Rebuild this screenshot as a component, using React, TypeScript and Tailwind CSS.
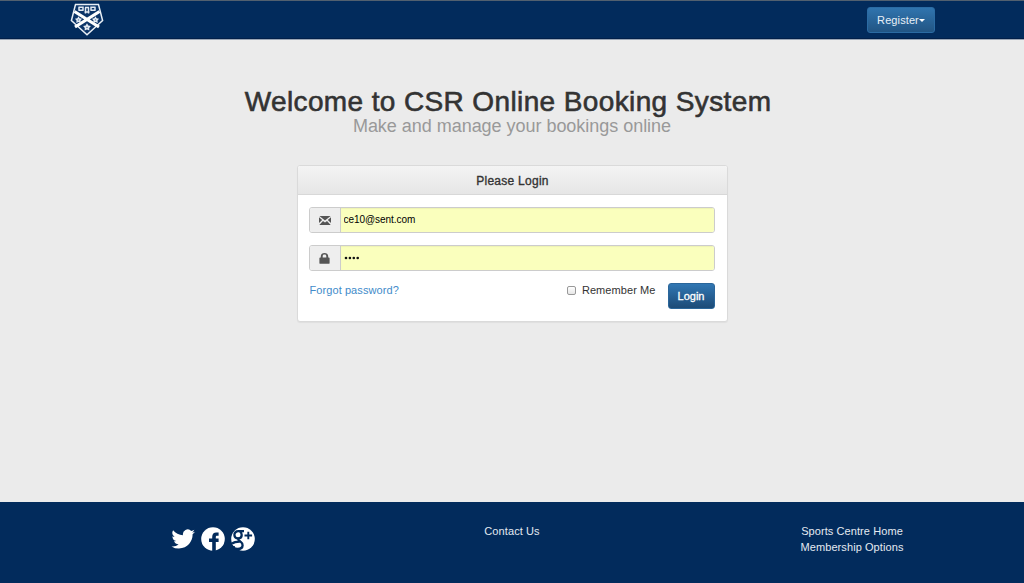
import React from "react";

const Crest = () => (
  <svg width="34" height="34" viewBox="0 0 34 34" fill="none">
    <path d="M5.500 1.500H28.500L32.600 17.500L17 31.800L1.400 17.500Z" fill="#0b3468" stroke="#e8eef5" strokeWidth="1.500" />
    <path d="M4.500 8.500L29 24M29.500 8.500L5 24" stroke="#fff" strokeWidth="3.200" />
    <path d="M9 4v3.500M13 3.500v4M21 3.500v4M25 4v3.500M8.500 4.200H13.500M8.500 7.300H13.500M20.500 4.200H25.500M20.500 7.300H25.500M15 4.500H19M14.500 9h5M15.500 4.500v6M18.500 4.500v6" stroke="#e3eaf3" strokeWidth="1.500" />
    <g fill="#e3eaf3">
      <path d="M8.500 13.200l1.200 2.100 2.400.5-1.600 1.800.2 2.400-2.200-.9-2.200.9.200-2.400-1.600-1.800 2.400-.5z" />
      <path d="M25.500 13.200l1.200 2.100 2.400.5-1.600 1.800.2 2.400-2.200-.9-2.200.9.200-2.400-1.600-1.800 2.400-.5z" />
      <path d="M17 20.300l1.300 2.300 2.600.5-1.700 1.900.2 2.600-2.400-1-2.400 1 .2-2.600-1.700-1.900 2.600-.5z" />
    </g>
    <g fill="#5c7ba0">
      <circle cx="8.500" cy="16.900" r=".7" />
      <circle cx="25.500" cy="16.900" r=".7" />
      <circle cx="17" cy="24.500" r=".8" />
    </g>
  </svg>
);

const Envelope = () => (
  <svg width="12" height="9" viewBox="0 0 12 9" fill="#555">
    <path d="M.4 0H11.6L6 4.600ZM0 1.200L3.200 4.100L0 7ZM12 1.200V7L8.800 4.100ZM4 5L6 6.600L8 5L11.700 9H.3Z" />
  </svg>
);

const Lock = () => (
  <svg width="11" height="11" viewBox="0 0 11 11" fill="#555">
    <path fillRule="evenodd" d="M1.800 4.500V3.300C1.800 1.200 3.300 0 5.500 0S9.200 1.200 9.200 3.300V4.500h.6q.8 0 .8.800v4.600q0 .9-.9.9H1.300q-.9 0-.9-.9V5.300q0-.8.8-.8zM3.700 4.500H7.300V3.500C7.300 2.300 6.700 1.600 5.500 1.600S3.700 2.300 3.700 3.500z" />
  </svg>
);

const Twitter = () => (
  <svg width="24" height="24" viewBox="-0.500 0 24.500 24" fill="#fff">
    <path d="M23.950 4.570a10 10 0 01-2.820.770 4.960 4.960 0 002.160-2.720c-.950.550-2 .960-3.130 1.180a4.920 4.920 0 00-8.380 4.480C7.690 8.090 4.070 6.130 1.640 3.160a4.920 4.920 0 001.520 6.570 4.900 4.900 0 01-2.230-.610v.060a4.920 4.920 0 003.950 4.830 5 5 0 01-2.210.080 4.930 4.930 0 004.600 3.420A9.870 9.870 0 010 19.540a13.990 13.990 0 007.550 2.210c9.050 0 14-7.500 14-13.980 0-.210 0-.420-.020-.630a9.940 9.940 0 002.460-2.550z" />
  </svg>
);

const Facebook = () => (
  <svg width="24" height="24" viewBox="0 0 24 24">
    <circle cx="12" cy="12" r="11.800" fill="#fff" />
    <path d="M11.200 24V15H8V11.500H11.200V10C11.200 7 12.800 5.600 15.300 5.600H17.600V8.800H16.200C15.200 8.800 14.800 9.300 14.800 10.200V11.500H17.600V15H14.800V24Z" fill="#022b5c" />
  </svg>
);

const GooglePlus = () => (
  <svg width="24" height="24" viewBox="0 0 24 24">
    <circle cx="12" cy="12" r="11.800" fill="#fff" />
    <g fill="none" stroke="#022b5c" strokeWidth="2.300">
      <path d="M13 4.200H7.500C4.700 4.200 3.300 6 3.400 8C3.500 10.100 4.900 11.400 7 11.400C9.400 11.400 10.700 9.900 10.700 8C10.700 6.500 10.100 5.300 8.900 4.400" />
      <path d="M7.500 11.400C6.600 12.900 8.100 13.600 9.500 14.700C11.100 15.900 11.700 16.900 11.600 18.400C11.500 20.900 9.500 22 6.700 22C4.500 22 2.600 21 2.400 19M1 16.600C3 15 5.500 14.600 9.300 14.700" />
      <path d="M17.300 4.700V12.300M13.500 8.500H21.100" strokeWidth="1.900" />
    </g>
  </svg>
);

const Field = ({ icon, type, value, label }: { icon: React.ReactNode; type: string; value: string; label: string }) => (
  <div className="flex h-[26px] w-[406px] overflow-hidden rounded-[3px] border border-[#ccc]">
    <span className="flex w-[31px] shrink-0 items-center justify-center border-r border-[#ccc] bg-[#eee]">{icon}</span>
    {type === "password" ? (
      <div aria-label={label} className="flex flex-1 items-center bg-[#faffbd] pb-[1px] pl-[3px] shadow-[inset_0_1px_1px_rgba(0,0,0,0.05)]">
        <svg width="16" height="4" viewBox="0 0 16 4" fill="#111">
          {value.split("").map((_, i) => (
            <circle key={i} cx={2 + i * 3.9} cy="2" r="1.300" />
          ))}
        </svg>
      </div>
    ) : (
      <input aria-label={label} type={type} defaultValue={value} className="min-w-0 flex-1 bg-[#faffbd] pb-[2px] pl-[3px] text-[10px] tracking-[-0.050px] text-black shadow-[inset_0_1px_1px_rgba(0,0,0,0.05)] outline-none" />
    )}
  </div>
);

export default function App() {
  return (
    <div className="flex h-[583px] w-[1024px] flex-col overflow-hidden bg-[#ebebeb] font-['Liberation_Sans',Arial,sans-serif] text-[11px] text-[#333]">
      <header className="flex h-[40px] shrink-0 items-start justify-between border-t border-b border-t-[#52606f] border-b-[#9aa6b5] bg-[#022b5c] pr-[89px] pl-[70px] shadow-[inset_0_-1px_0_#011f49]">
        <div className="pt-[2px]"><Crest /></div>
        <button className="mt-[6px] flex h-[26px] w-[68px] items-center justify-center rounded-[3px] border border-[#2b6ba3] bg-linear-to-b from-[#3074ae] to-[#225584] text-[11px] text-[#e8f0f7]">
          <span className="tracking-[0.1px]">Register</span>
          <svg width="6" height="3" viewBox="0 0 6 3" fill="#fff"><path d="M0 0H6L3 3Z" /></svg>
        </button>
      </header>

      <main className="flex flex-1 flex-col items-center">
        <h1 className="mt-[46px] mr-[8px] h-[32px] text-[28px] leading-[32px] tracking-[0.380px] whitespace-nowrap text-[#333] [-webkit-text-stroke:0.600px_#333]">
          Welcome to CSR Online Booking System
        </h1>
        <p className="-mt-[2px] h-[20px] text-[18px] leading-[20px] tracking-[-0.030px] whitespace-nowrap text-[#999]">Make and manage your bookings online</p>

        <section className="mt-[29px] h-[157px] w-[431px] rounded-[3px] border border-[#dadada] bg-white shadow-[0_1px_1px_rgba(0,0,0,0.05)]">
          <h2 className="flex h-[29px] items-center justify-center rounded-t-[2px] border-b border-[#d8d8d8] bg-linear-to-b from-[#f4f4f4] to-[#e6e6e6] pt-[2px] pl-[1px] text-[12px] tracking-[0.270px] [-webkit-text-stroke:0.350px_#333]">
            Please Login
          </h2>
          <div className="flex flex-col gap-3 px-[11px] pt-3">
            <Field icon={<Envelope />} type="email" value="ce10@sent.com" label="Email" />
            <Field icon={<Lock />} type="password" value="1234" label="Password" />
            <div className="flex w-[406px] items-start">
              <a className="pl-[1px] leading-[14px] tracking-[0.080px] text-[#428bca]">Forgot password?</a>
              <label className="ml-auto flex items-center gap-[6px] leading-[14px] tracking-[0.080px]">
                <span className="h-[9px] w-[9px] rounded-[2px] border border-[#999] bg-linear-to-b from-white to-[#e6e6e6]" />
                Remember Me
              </label>
              <button className="ml-[12px] h-[26px] w-[47px] rounded-[3px] border border-[#2b669a] bg-linear-to-b from-[#3177b3] to-[#1d4b77] text-[11px] text-white [-webkit-text-stroke:0.300px_white]">
                Login
              </button>
            </div>
          </div>
        </section>
      </main>

      <footer className="flex h-[81px] shrink-0 bg-[#022b5c] text-[11px] leading-[16px] text-[#e4eaf1]">
        <div className="flex w-[346px] gap-[6px] pt-[25px] pl-[171px]">
          <Twitter />
          <Facebook />
          <GooglePlus />
        </div>
        <div className="w-[332px] pt-[21px] text-center tracking-[0.100px]">Contact Us</div>
        <div className="flex w-[346px] flex-col items-center pt-[21px] pl-[2px] tracking-[0.080px]">
          <span>Sports Centre Home</span>
          <span>Membership Options</span>
        </div>
      </footer>
    </div>
  );
}
